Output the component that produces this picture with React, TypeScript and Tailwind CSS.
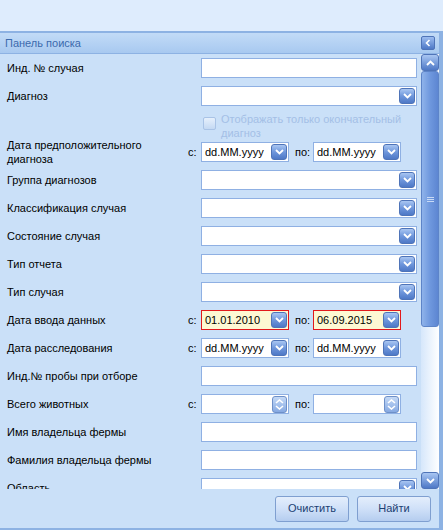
import React from "react";

const font = { fontFamily: "'Liberation Sans', Arial, sans-serif" };

const Chevron = ({ up = false }: { up?: boolean }) => (
  <svg width="9" height="6" viewBox="0 0 9 6">
    <path
      d={up ? "M1 5 L4.5 1.5 L8 5" : "M1 1 L4.5 4.5 L8 1"}
      fill="none"
      stroke="white"
      strokeWidth="1.8"
    />
  </svg>
);

const TriggerBtn = () => (
  <div className="flex h-[16px] w-[16px] shrink-0 items-center justify-center rounded-[3px] border border-[#4f74b8] bg-gradient-to-b from-[#a9c6f2] via-[#6f97dc] to-[#4e78c6]">
    <Chevron />
  </div>
);

const SpinBtn = () => (
  <div className="flex h-[17px] w-[15px] shrink-0 flex-col items-center justify-center gap-[1px] rounded-[3px] border border-[#6e90c8] bg-gradient-to-b from-[#c4d9f6] to-[#86a9e2]">
    <svg width="9" height="5" viewBox="0 0 9 5">
      <path d="M1 4 L4.5 1 L8 4" fill="none" stroke="white" strokeWidth="1.6" />
    </svg>
    <svg width="9" height="5" viewBox="0 0 9 5">
      <path d="M1 1 L4.5 4 L8 1" fill="none" stroke="white" strokeWidth="1.6" />
    </svg>
  </div>
);

const TextField = () => (
  <div className="h-[20px] w-[216px] shrink-0 border border-[#8fb0e3] bg-white" />
);

const Combo = () => (
  <div className="flex h-[20px] w-[216px] shrink-0 items-center justify-end border border-[#8fb0e3] bg-white pr-[1px]">
    <TriggerBtn />
  </div>
);

const DateField = ({ value, invalid = false }: { value: string; invalid?: boolean }) => (
  <div
    className={
      invalid
        ? "flex h-[20px] w-[88px] shrink-0 items-center justify-between border border-[#e2191c] bg-[#fdf8d3] pl-[3px] pr-[1px]"
        : "flex h-[20px] w-[88px] shrink-0 items-center justify-between border border-[#8fb0e3] bg-white pl-[3px] pr-[1px]"
    }
  >
    <span className="text-[11px] text-black">{value}</span>
    <TriggerBtn />
  </div>
);

const SpinField = () => (
  <div className="flex h-[20px] w-[88px] shrink-0 items-center justify-end border border-[#8fb0e3] bg-white pr-[1px]">
    <SpinBtn />
  </div>
);

const Row = ({ label, children }: { label: React.ReactNode; children: React.ReactNode }) => (
  <div className="flex h-[28px] items-center">
    <div className="w-[201px] shrink-0 pl-[7px] text-[11px] leading-[14px] text-black">{label}</div>
    {children}
  </div>
);

const RangeRow = ({
  label,
  from,
  to,
}: {
  label: React.ReactNode;
  from: React.ReactNode;
  to: React.ReactNode;
}) => (
  <div className="flex h-[28px] items-center">
    <div className="w-[188px] shrink-0 pl-[7px] text-[11px] leading-[14px] text-black">{label}</div>
    <span className="w-[13px] shrink-0 text-[11px] text-black">с:</span>
    {from}
    <span className="w-[24px] shrink-0 pl-[6px] text-[11px] text-black">по:</span>
    {to}
  </div>
);

const ToolBtn = ({ children }: { children: React.ReactNode }) => (
  <button className="h-[26px] w-[74px] rounded-[3px] border border-[#7f9fd0] bg-gradient-to-b from-[#e4eefc] via-[#cfe0f8] to-[#b5cdef] text-[11px] text-[#1c3f73]">
    {children}
  </button>
);

export default function App() {
  return (
    <div className="h-[530px] w-[443px] overflow-hidden bg-[#deecfd]" style={font}>
      <div className="h-[31px]" />
      <div className="flex h-[499px] flex-col border-t-2 border-r-4 border-[#8db2e3] bg-[#cae0f8]">
        <div className="flex h-[21px] items-center justify-between border-b border-[#8db2e3] bg-gradient-to-b from-[#c2dbf7] to-[#a8c9f0] pl-[5px] pr-[4px]">
          <span className="text-[11px] text-[#3b6aad]">Панель поиска</span>
          <div className="flex h-[14px] w-[14px] items-center justify-center rounded-[2px] border border-[#4f74b8] bg-gradient-to-b from-[#9dbdf0] to-[#4e78c6]">
            <svg width="6" height="8" viewBox="0 0 6 8">
              <path d="M4.5 1 L1.5 4 L4.5 7" fill="none" stroke="white" strokeWidth="1.6" />
            </svg>
          </div>
        </div>
        <div className="flex h-[435px]">
          <div className="flex-1 overflow-hidden">
            <Row label="Инд. № случая">
              <TextField />
            </Row>
            <Row label="Диагноз">
              <Combo />
            </Row>
            <div className="flex h-[28px] items-start pt-[2px]">
              <div className="w-[203px] shrink-0" />
              <div className="mt-[5px] h-[13px] w-[13px] shrink-0 rounded-[2px] border border-[#a9c3e6] bg-gradient-to-b from-[#e6f0fc] to-[#c4d9f3]" />
              <div className="pl-[5px] text-[11px] leading-[14px] text-[#a4bfe6]">
                Отображать только окончательный
                <br />
                диагноз
              </div>
            </div>
            <RangeRow
              label={
                <>
                  Дата предположительного
                  <br />
                  диагноза
                </>
              }
              from={<DateField value="dd.MM.yyyy" />}
              to={<DateField value="dd.MM.yyyy" />}
            />
            <Row label="Группа диагнозов">
              <Combo />
            </Row>
            <Row label="Классификация случая">
              <Combo />
            </Row>
            <Row label="Состояние случая">
              <Combo />
            </Row>
            <Row label="Тип отчета">
              <Combo />
            </Row>
            <Row label="Тип случая">
              <Combo />
            </Row>
            <RangeRow
              label="Дата ввода данных"
              from={<DateField value="01.01.2010" invalid />}
              to={<DateField value="06.09.2015" invalid />}
            />
            <RangeRow
              label="Дата расследования"
              from={<DateField value="dd.MM.yyyy" />}
              to={<DateField value="dd.MM.yyyy" />}
            />
            <Row label="Инд.№ пробы при отборе">
              <TextField />
            </Row>
            <RangeRow label="Всего животных" from={<SpinField />} to={<SpinField />} />
            <Row label="Имя владельца фермы">
              <TextField />
            </Row>
            <Row label="Фамилия владельца фермы">
              <TextField />
            </Row>
            <Row label="Область">
              <Combo />
            </Row>
          </div>
          <div className="flex w-[18px] flex-col bg-gradient-to-r from-[#d6e7fb] to-white">
            <div className="flex h-[17px] items-center justify-center rounded-[3px] border border-[#4f74b8] bg-gradient-to-b from-[#a9c6f2] to-[#4e78c6]">
              <Chevron up />
            </div>
            <div className="flex h-[256px] items-center justify-center rounded-[3px] border border-[#5d84c8] bg-gradient-to-r from-[#8fb3ea] via-[#6f98de] to-[#5d86d2]">
              <div className="flex flex-col gap-[1px]">
                <div className="h-[1px] w-[7px] bg-[#c8daf6]" />
                <div className="h-[1px] w-[7px] bg-[#c8daf6]" />
                <div className="h-[1px] w-[7px] bg-[#c8daf6]" />
              </div>
            </div>
            <div className="flex-1" />
            <div className="flex h-[17px] items-center justify-center rounded-[3px] border border-[#4f74b8] bg-gradient-to-b from-[#a9c6f2] to-[#4e78c6]">
              <Chevron />
            </div>
          </div>
        </div>
        <div className="flex flex-1 items-center justify-end gap-[8px] border-b-2 border-[#8db2e3] pr-[8px]">
          <ToolBtn>Очистить</ToolBtn>
          <ToolBtn>Найти</ToolBtn>
        </div>
      </div>
    </div>
  );
}
